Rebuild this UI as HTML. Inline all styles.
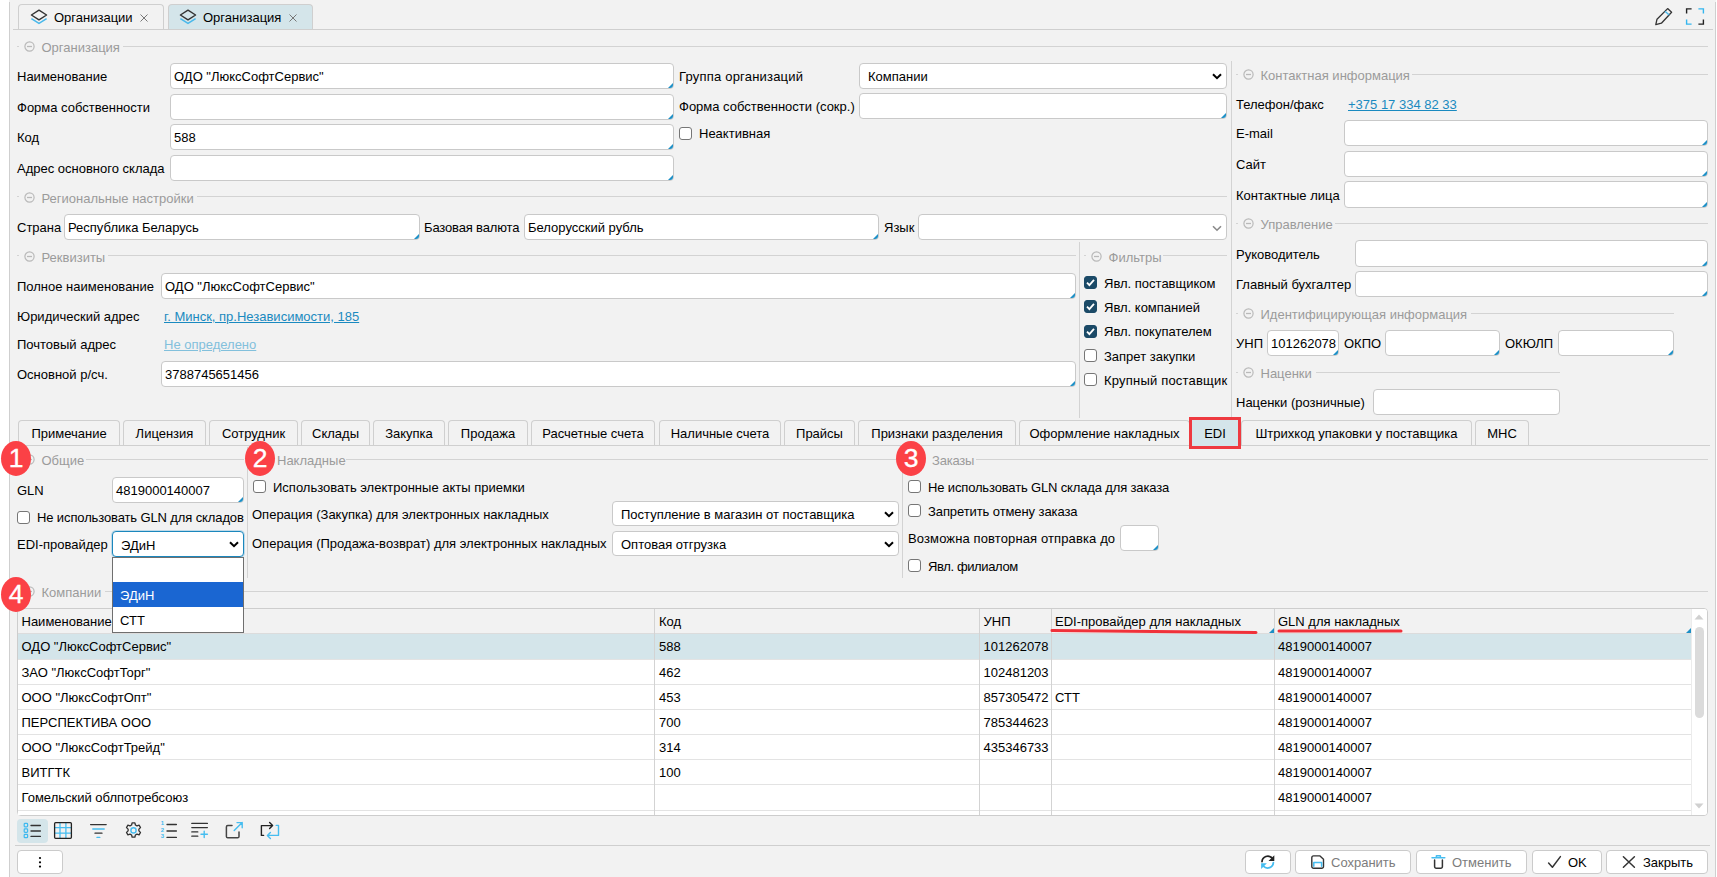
<!DOCTYPE html><html lang="ru"><head><meta charset="utf-8"><title>Организация</title><style>
*{box-sizing:border-box;margin:0;padding:0}
html,body{width:1717px;height:877px;overflow:hidden;background:#fff}
body{position:relative;font-family:"Liberation Sans",sans-serif;font-size:13px;color:#000;line-height:16px}
#bg{position:absolute;left:9px;top:0;width:1707px;height:877px;background:#f2f2f2}
.a{position:absolute;white-space:nowrap}
.in{position:absolute;background:#fff;border:1px solid #c9c9c9;border-radius:4px;height:26px;line-height:24px;padding-left:3px;padding-top:1px;white-space:nowrap;overflow:hidden}
.c::after{content:"";position:absolute;right:0;bottom:0;border-style:solid;border-width:0 0 5px 5px;border-color:transparent transparent #1c8fc6 transparent}
.sel{padding-left:8px}
.hl{position:absolute;height:1px;background:#d3d3d3}
.vl{position:absolute;width:1px;background:#d3d3d3}
.lg{position:absolute;color:#9b9b9b;white-space:nowrap}
.cb{position:absolute;width:13px;height:13px;border:1px solid #767676;border-radius:3px;background:#fff}
.cb.on{background:#1b4a67;border-color:#1b4a67}
.lk{position:absolute;color:#1a8ac0;text-decoration:underline;white-space:nowrap}
.tab{position:absolute;border:1px solid #cfcfcf;border-bottom:none;border-radius:4px 4px 0 0;height:26px;line-height:25px;text-align:center;white-space:nowrap}
.btn{position:absolute;background:#fff;border:1px solid #cbcbcb;border-radius:4px;height:24px;top:850px}
.num{position:absolute;width:30px;height:35px;border-radius:50%;background:#fb4146;color:#fff;font-size:26.5px;line-height:35px;text-align:center;-webkit-text-stroke:0.35px #fff}
svg{position:absolute;overflow:visible}
.row{position:absolute;left:18px;width:1673px;height:25px;border-bottom:1px solid #e3e3e3;background:#fff}
.cell{position:absolute;top:0;height:24px;line-height:24px;white-space:nowrap}
</style></head><body><div id="bg"></div>
<div class="vl" style="left:9px;top:2px;height:875px;background:#cfcfcf"></div>
<div class="vl" style="left:1715px;top:2px;height:875px;background:#cfcfcf"></div>
<div class="hl" style="left:13px;top:29px;width:1700px;background:#cfcfcf"></div>
<div class="tab" style="left:18px;top:4px;width:146px;height:25px"></div>
<div class="tab" style="left:168px;top:4px;width:145px;height:25px;background:#d4e5ea"></div>
<svg style="left:30px;top:9px" width="18" height="16" viewBox="0 0 18 16"><path d="M9 1.2L16.6 6 9 10.8 1.4 6z" fill="none" stroke="#333" stroke-width="1.4" stroke-linejoin="round"/><path d="M1.4 9.6L9 14.4l7.6-4.8" fill="none" stroke="#49b8ea" stroke-width="1.5" stroke-linejoin="round"/></svg>
<svg style="left:179px;top:9px" width="18" height="16" viewBox="0 0 18 16"><path d="M9 1.2L16.6 6 9 10.8 1.4 6z" fill="none" stroke="#333" stroke-width="1.4" stroke-linejoin="round"/><path d="M1.4 9.6L9 14.4l7.6-4.8" fill="none" stroke="#49b8ea" stroke-width="1.5" stroke-linejoin="round"/></svg>
<div class="a" style="left:54px;top:10px;">Организации</div>
<div class="a" style="left:203px;top:10px;">Организация</div>
<svg style="left:140px;top:14px" width="8" height="8" viewBox="0 0 8 8"><path d="M0.5 0.5l7 7M7.5 0.5l-7 7" stroke="#777" stroke-width="1"/></svg>
<svg style="left:289px;top:14px" width="8" height="8" viewBox="0 0 8 8"><path d="M0.5 0.5l7 7M7.5 0.5l-7 7" stroke="#777" stroke-width="1"/></svg>
<svg style="left:1654px;top:7px" width="20" height="19" viewBox="0 0 20 19"><path d="M13.6 1.6l4 3.6L7.4 16.2l-5.6 1.4 1.2-5.4z" fill="none" stroke="#333" stroke-width="1.3" stroke-linejoin="round"/><path d="M11 4.2l4.2 3.8" stroke="#49b8ea" stroke-width="1.4"/></svg>
<svg style="left:1685px;top:8px" width="20" height="18" viewBox="0 0 20 18"><path d="M1.6 5.4V0.9h5" fill="none" stroke="#222" stroke-width="1.4"/><path d="M13.4 0.9h5v4.5" fill="none" stroke="#35b6ee" stroke-width="1.4"/><path d="M1.6 11.6v4.5h5" fill="none" stroke="#35b6ee" stroke-width="1.4"/><path d="M13.4 16.1h5v-4.5" fill="none" stroke="#222" stroke-width="1.4"/></svg>
<div class="hl" style="left:17px;top:46px;width:2px;"></div>
<svg style="left:24px;top:40.5px" width="11" height="11" viewBox="0 0 11 11"><circle cx="5.5" cy="5.5" r="4.6" fill="none" stroke="#b9b9b9" stroke-width="1.2"/><path d="M3 5.5h5" stroke="#b9b9b9" stroke-width="1.3"/></svg>
<div class="lg" id="lg_16" style="left:41.5px;top:40px">Организация</div>
<div class="hl" style="left:123px;top:46px;width:1585px;"></div>
<div class="a" style="left:17px;top:69px;">Наименование</div>
<div class="in c" style="left:170px;top:63px;width:504px;height:26px;line-height:24px">ОДО "ЛюксСофтСервис"</div>
<div class="a" style="left:17px;top:100px;">Форма собственности</div>
<div class="in c" style="left:170px;top:94px;width:504px;height:26px;line-height:24px"></div>
<div class="a" style="left:17px;top:130px;">Код</div>
<div class="in c" style="left:170px;top:124px;width:504px;height:26px;line-height:24px">588</div>
<div class="a" style="left:17px;top:161px;">Адрес основного склада</div>
<div class="in c" style="left:170px;top:155px;width:504px;height:26px;line-height:24px"></div>
<div class="a" style="left:679px;top:69px;letter-spacing:0.2px">Группа организаций</div>
<div class="in sel" style="left:859px;top:63px;width:368px;height:26px;line-height:24px">Компании</div>
<svg style="left:1212px;top:73px" width="10" height="7" viewBox="0 0 10 7"><path d="M1 1.2l4 4 4-4" fill="none" stroke="#000" stroke-width="2"/></svg>
<div class="a" style="left:679px;top:99px;">Форма собственности (сокр.)</div>
<div class="in c" style="left:859px;top:93px;width:368px;height:26px;line-height:24px"></div>
<div class="cb" style="left:679px;top:127px"></div>
<div class="a" style="left:699px;top:126px;">Неактивная</div>
<div class="hl" style="left:17px;top:196px;width:2px;"></div>
<svg style="left:24px;top:191.5px" width="11" height="11" viewBox="0 0 11 11"><circle cx="5.5" cy="5.5" r="4.6" fill="none" stroke="#b9b9b9" stroke-width="1.2"/><path d="M3 5.5h5" stroke="#b9b9b9" stroke-width="1.3"/></svg>
<div class="lg" id="lg_35" style="left:41.5px;top:191px">Региональные настройки</div>
<div class="hl" style="left:197px;top:196px;width:1030px;"></div>
<div class="a" style="left:17px;top:220px;">Страна</div>
<div class="in c" style="left:64px;top:214px;width:356px;height:26px;line-height:24px">Республика Беларусь</div>
<div class="a" style="left:424px;top:220px;letter-spacing:-0.15px">Базовая валюта</div>
<div class="in c" style="left:524px;top:214px;width:355px;height:26px;line-height:24px">Белорусский рубль</div>
<div class="a" style="left:884px;top:220px;">Язык</div>
<div class="in" style="left:918px;top:214px;width:309px;height:26px;line-height:24px"></div>
<svg style="left:1212px;top:225px" width="10" height="7" viewBox="0 0 10 7"><path d="M1 1.2l4 4 4-4" fill="none" stroke="#8a8a8a" stroke-width="1.6"/></svg>
<div class="hl" style="left:17px;top:255px;width:2px;"></div>
<svg style="left:24px;top:250.5px" width="11" height="11" viewBox="0 0 11 11"><circle cx="5.5" cy="5.5" r="4.6" fill="none" stroke="#b9b9b9" stroke-width="1.2"/><path d="M3 5.5h5" stroke="#b9b9b9" stroke-width="1.3"/></svg>
<div class="lg" id="lg_46" style="left:41.5px;top:250px">Реквизиты</div>
<div class="hl" style="left:108px;top:255px;width:968px;"></div>
<div class="a" style="left:17px;top:279px;">Полное наименование</div>
<div class="in c" style="left:161px;top:273px;width:915px;height:26px;line-height:24px">ОДО "ЛюксСофтСервис"</div>
<div class="a" style="left:17px;top:309px;">Юридический адрес</div>
<div class="lk" style="left:164px;top:309px;">г. Минск, пр.Независимости, 185</div>
<div class="a" style="left:17px;top:337px;">Почтовый адрес</div>
<div class="lk" style="left:164px;top:337px;color:#82c0dc">Не определено</div>
<div class="a" style="left:17px;top:367px;">Основной р/сч.</div>
<div class="in c" style="left:161px;top:361px;width:915px;height:26px;line-height:24px">3788745651456</div>
<div class="vl" style="left:1079px;top:242px;height:176px"></div>
<div class="hl" style="left:1084px;top:255px;width:2px;"></div>
<svg style="left:1091px;top:250.5px" width="11" height="11" viewBox="0 0 11 11"><circle cx="5.5" cy="5.5" r="4.6" fill="none" stroke="#b9b9b9" stroke-width="1.2"/><path d="M3 5.5h5" stroke="#b9b9b9" stroke-width="1.3"/></svg>
<div class="lg" id="lg_59" style="left:1108.5px;top:250px">Фильтры</div>
<div class="hl" style="left:1163px;top:255px;width:64px;"></div>
<div class="cb on" style="left:1084px;top:276px"><svg style="left:0;top:0" width="11" height="11" viewBox="0 0 11 11"><path d="M2 5.6l2.4 2.5L9 2.8" fill="none" stroke="#fff" stroke-width="1.8"/></svg></div>
<div class="a" style="left:1104px;top:276px;">Явл. поставщиком</div>
<div class="cb on" style="left:1084px;top:300px"><svg style="left:0;top:0" width="11" height="11" viewBox="0 0 11 11"><path d="M2 5.6l2.4 2.5L9 2.8" fill="none" stroke="#fff" stroke-width="1.8"/></svg></div>
<div class="a" style="left:1104px;top:300px;">Явл. компанией</div>
<div class="cb on" style="left:1084px;top:325px"><svg style="left:0;top:0" width="11" height="11" viewBox="0 0 11 11"><path d="M2 5.6l2.4 2.5L9 2.8" fill="none" stroke="#fff" stroke-width="1.8"/></svg></div>
<div class="a" style="left:1104px;top:324px;">Явл. покупателем</div>
<div class="cb" style="left:1084px;top:349px"></div>
<div class="a" style="left:1104px;top:349px;">Запрет закупки</div>
<div class="cb" style="left:1084px;top:373px"></div>
<div class="a" style="left:1104px;top:373px;letter-spacing:0.2px">Крупный поставщик</div>
<div class="vl" style="left:1231px;top:61px;height:357px"></div>
<div class="hl" style="left:1236px;top:74px;width:2px;"></div>
<svg style="left:1243px;top:68.5px" width="11" height="11" viewBox="0 0 11 11"><circle cx="5.5" cy="5.5" r="4.6" fill="none" stroke="#b9b9b9" stroke-width="1.2"/><path d="M3 5.5h5" stroke="#b9b9b9" stroke-width="1.3"/></svg>
<div class="lg" id="lg_74" style="left:1260.5px;top:68px">Контактная информация</div>
<div class="hl" style="left:1412px;top:74px;width:296px;"></div>
<div class="a" style="left:1236px;top:97px;">Телефон/факс</div>
<div class="lk" style="left:1348px;top:97px;">+375 17 334 82 33</div>
<div class="a" style="left:1236px;top:126px;">E-mail</div>
<div class="in c" style="left:1344px;top:120px;width:364px;height:26px;line-height:24px"></div>
<div class="a" style="left:1236px;top:157px;">Сайт</div>
<div class="in c" style="left:1344px;top:151px;width:364px;height:26px;line-height:24px"></div>
<div class="a" style="left:1236px;top:188px;">Контактные лица</div>
<div class="in c" style="left:1344px;top:181px;width:364px;height:27px;line-height:25px"></div>
<div class="hl" style="left:1236px;top:223px;width:2px;"></div>
<svg style="left:1243px;top:217.5px" width="11" height="11" viewBox="0 0 11 11"><circle cx="5.5" cy="5.5" r="4.6" fill="none" stroke="#b9b9b9" stroke-width="1.2"/><path d="M3 5.5h5" stroke="#b9b9b9" stroke-width="1.3"/></svg>
<div class="lg" id="lg_86" style="left:1260.5px;top:217px">Управление</div>
<div class="hl" style="left:1335px;top:223px;width:373px;"></div>
<div class="a" style="left:1236px;top:247px;">Руководитель</div>
<div class="in c" style="left:1355px;top:240px;width:353px;height:27px;line-height:25px"></div>
<div class="a" style="left:1236px;top:277px;">Главный бухгалтер</div>
<div class="in c" style="left:1355px;top:271px;width:353px;height:26px;line-height:24px"></div>
<div class="hl" style="left:1236px;top:313px;width:2px;"></div>
<svg style="left:1243px;top:307.5px" width="11" height="11" viewBox="0 0 11 11"><circle cx="5.5" cy="5.5" r="4.6" fill="none" stroke="#b9b9b9" stroke-width="1.2"/><path d="M3 5.5h5" stroke="#b9b9b9" stroke-width="1.3"/></svg>
<div class="lg" id="lg_94" style="left:1260.5px;top:307px">Идентифицирующая информация</div>
<div class="hl" style="left:1471px;top:313px;width:203px;"></div>
<div class="a" style="left:1236px;top:336px;">УНП</div>
<div class="in c" style="left:1267px;top:330px;width:72px;height:26px;line-height:24px">101262078</div>
<div class="a" style="left:1344px;top:336px;">ОКПО</div>
<div class="in c" style="left:1385px;top:330px;width:115px;height:26px;line-height:24px"></div>
<div class="a" style="left:1505px;top:336px;">ОКЮЛП</div>
<div class="in c" style="left:1558px;top:330px;width:116px;height:26px;line-height:24px"></div>
<div class="hl" style="left:1236px;top:372px;width:2px;"></div>
<svg style="left:1243px;top:366.5px" width="11" height="11" viewBox="0 0 11 11"><circle cx="5.5" cy="5.5" r="4.6" fill="none" stroke="#b9b9b9" stroke-width="1.2"/><path d="M3 5.5h5" stroke="#b9b9b9" stroke-width="1.3"/></svg>
<div class="lg" id="lg_104" style="left:1260.5px;top:366px">Наценки</div>
<div class="hl" style="left:1316px;top:372px;width:244px;"></div>
<div class="a" style="left:1236px;top:395px;">Наценки (розничные)</div>
<div class="in" style="left:1373px;top:389px;width:187px;height:26px;line-height:24px"></div>
<div class="hl" style="left:13px;top:445px;width:1697px;background:#cfcfcf"></div>
<div class="tab" style="left:18px;top:420px;width:102px;height:25px">Примечание</div>
<div class="tab" style="left:123px;top:420px;width:83px;height:25px">Лицензия</div>
<div class="tab" style="left:209px;top:420px;width:89px;height:25px">Сотрудник</div>
<div class="tab" style="left:301px;top:420px;width:69px;height:25px">Склады</div>
<div class="tab" style="left:373px;top:420px;width:72px;height:25px">Закупка</div>
<div class="tab" style="left:448px;top:420px;width:80px;height:25px">Продажа</div>
<div class="tab" style="left:531px;top:420px;width:124px;height:25px">Расчетные счета</div>
<div class="tab" style="left:659px;top:420px;width:122px;height:25px">Наличные счета</div>
<div class="tab" style="left:784px;top:420px;width:71px;height:25px">Прайсы</div>
<div class="tab" style="left:858px;top:420px;width:158px;height:25px">Признаки разделения</div>
<div class="tab" style="left:1019px;top:420px;width:171px;height:25px">Оформление накладных</div>
<div class="tab" style="left:1189px;top:417px;width:52px;height:32px;line-height:27px;border:3px solid #ee3a40;border-radius:0;background:#d4e5ea">EDI</div>
<div class="tab" style="left:1241px;top:420px;width:231px;height:25px">Штрихкод упаковки у поставщика</div>
<div class="tab" style="left:1475px;top:420px;width:54px;height:25px">МНС</div>
<div class="hl" style="left:17px;top:459px;width:2px;"></div>
<svg style="left:24px;top:453.5px" width="11" height="11" viewBox="0 0 11 11"><circle cx="5.5" cy="5.5" r="4.6" fill="none" stroke="#b9b9b9" stroke-width="1.2"/><path d="M3 5.5h5" stroke="#b9b9b9" stroke-width="1.3"/></svg>
<div class="lg" id="lg_125" style="left:41.5px;top:453px">Общие</div>
<div class="hl" style="left:86px;top:459px;width:158px;"></div>
<div class="a" style="left:17px;top:483px;">GLN</div>
<div class="in c" style="left:112px;top:477px;width:132px;height:26px;line-height:24px">4819000140007</div>
<div class="cb" style="left:17px;top:511px"></div>
<div class="a" style="left:37px;top:510px;letter-spacing:-0.12px">Не использовать GLN для складов</div>
<div class="a" style="left:17px;top:537px;">EDI-провайдер</div>
<div class="in sel" style="left:112px;top:531px;width:132px;border-color:#1b87bd;box-shadow:0 0 0 1px rgba(100,175,215,.35);padding-top:2px">ЭДиН</div>
<svg style="left:229px;top:541px" width="10" height="7" viewBox="0 0 10 7"><path d="M1 1.2l4 4 4-4" fill="none" stroke="#000" stroke-width="2"/></svg>
<div class="vl" style="left:247px;top:447px;height:131px"></div>
<div class="hl" style="left:248px;top:459px;width:4px;"></div>
<div class="lg" style="left:277px;top:453px">Накладные</div>
<div class="hl" style="left:346px;top:459px;width:552px;"></div>
<div class="cb" style="left:253px;top:480px"></div>
<div class="a" style="left:273px;top:480px;">Использовать электронные акты приемки</div>
<div class="a" style="left:252px;top:507px;">Операция (Закупка) для электронных накладных</div>
<div class="a" style="left:252px;top:536px;">Операция (Продажа-возврат) для электронных накладных</div>
<div class="in sel" style="left:612px;top:501px;width:287px;height:25px;line-height:23px">Поступление в магазин от поставщика</div>
<svg style="left:884px;top:511px" width="10" height="7" viewBox="0 0 10 7"><path d="M1 1.2l4 4 4-4" fill="none" stroke="#000" stroke-width="2"/></svg>
<div class="in sel" style="left:612px;top:531px;width:287px;height:25px;line-height:23px">Оптовая отгрузка</div>
<svg style="left:884px;top:541px" width="10" height="7" viewBox="0 0 10 7"><path d="M1 1.2l4 4 4-4" fill="none" stroke="#000" stroke-width="2"/></svg>
<div class="vl" style="left:902px;top:447px;height:131px"></div>
<div class="lg" style="left:932px;top:453px;letter-spacing:-0.2px">Заказы</div>
<div class="hl" style="left:976px;top:459px;width:732px;"></div>
<div class="cb" style="left:908px;top:480px"></div>
<div class="a" style="left:928px;top:480px;letter-spacing:-0.15px">Не использовать GLN склада для заказа</div>
<div class="cb" style="left:908px;top:504px"></div>
<div class="a" style="left:928px;top:504px;letter-spacing:-0.09px">Запретить отмену заказа</div>
<div class="a" style="left:908px;top:531px;letter-spacing:0.12px">Возможна повторная отправка до</div>
<div class="in c" style="left:1120px;top:525px;width:39px;height:26px;line-height:24px"></div>
<div class="cb" style="left:908px;top:559px"></div>
<div class="a" style="left:928px;top:559px;letter-spacing:-0.38px">Явл. филиалом</div>
<div class="hl" style="left:17px;top:591px;width:2px;"></div>
<svg style="left:24px;top:585.5px" width="11" height="11" viewBox="0 0 11 11"><circle cx="5.5" cy="5.5" r="4.6" fill="none" stroke="#b9b9b9" stroke-width="1.2"/><path d="M3 5.5h5" stroke="#b9b9b9" stroke-width="1.3"/></svg>
<div class="lg" id="lg_159" style="left:41.5px;top:585px">Компании</div>
<div class="hl" style="left:105px;top:591px;width:1603px;"></div>
<div class="a" style="left:17px;top:608px;width:1691px;height:208px;border:1px solid #cdcdcd;border-radius:4px;background:#fff;overflow:hidden"></div>
<div class="a" style="left:18px;top:609px;width:1673px;height:25px;background:#f2f2f2;border-bottom:1px solid #dcdcdc"></div>
<div class="a" style="left:21.5px;top:614px;">Наименование</div>
<div class="a" style="left:659px;top:614px;">Код</div>
<div class="a" style="left:983.5px;top:614px;">УНП</div>
<div class="a" style="left:1055px;top:614px;">EDI-провайдер для накладных</div>
<div class="a" style="left:1278px;top:614px;">GLN для накладных</div>
<div class="row" style="top:634px;height:26px;background:#d4e5ea;">
<span class="cell" style="left:3.5px;top:1px">ОДО "ЛюксСофтСервис"</span>
<span class="cell" style="left:641px;top:1px">588</span>
<span class="cell" style="left:965.5px;top:1px">101262078</span>
<span class="cell" style="left:1260px;top:1px">4819000140007</span>
</div>
<div class="row" style="top:660px;height:25px;">
<span class="cell" style="left:3.5px;top:1px">ЗАО "ЛюксСофтТорг"</span>
<span class="cell" style="left:641px;top:1px">462</span>
<span class="cell" style="left:965.5px;top:1px">102481203</span>
<span class="cell" style="left:1260px;top:1px">4819000140007</span>
</div>
<div class="row" style="top:685px;height:25px;">
<span class="cell" style="left:3.5px;top:1px">ООО "ЛюксСофтОпт"</span>
<span class="cell" style="left:641px;top:1px">453</span>
<span class="cell" style="left:965.5px;top:1px">857305472</span>
<span class="cell" style="left:1037px;top:1px">СТТ</span>
<span class="cell" style="left:1260px;top:1px">4819000140007</span>
</div>
<div class="row" style="top:710px;height:25px;">
<span class="cell" style="left:3.5px;top:1px">ПЕРСПЕКТИВА ООО</span>
<span class="cell" style="left:641px;top:1px">700</span>
<span class="cell" style="left:965.5px;top:1px">785344623</span>
<span class="cell" style="left:1260px;top:1px">4819000140007</span>
</div>
<div class="row" style="top:735px;height:25px;">
<span class="cell" style="left:3.5px;top:1px">ООО "ЛюксСофтТрейд"</span>
<span class="cell" style="left:641px;top:1px">314</span>
<span class="cell" style="left:965.5px;top:1px">435346733</span>
<span class="cell" style="left:1260px;top:1px">4819000140007</span>
</div>
<div class="row" style="top:760px;height:25px;">
<span class="cell" style="left:3.5px;top:1px">ВИТГТК</span>
<span class="cell" style="left:641px;top:1px">100</span>
<span class="cell" style="left:1260px;top:1px">4819000140007</span>
</div>
<div class="row" style="top:785px;height:26px;">
<span class="cell" style="left:3.5px;top:1px">Гомельский облпотребсоюз</span>
<span class="cell" style="left:1260px;top:1px">4819000140007</span>
</div>
<div class="a" style="left:18px;top:811px;width:1673px;height:4px;background:#fff"></div>
<div class="vl" style="left:654px;top:609px;height:206px"></div>
<div class="vl" style="left:979px;top:609px;height:206px"></div>
<div class="vl" style="left:1051px;top:609px;height:206px"></div>
<div class="vl" style="left:1274px;top:609px;height:206px"></div>
<div class="a" style="left:1269px;top:628px;border-style:solid;border-width:0 0 5px 5px;border-color:transparent transparent #1c8fc6 transparent"></div>
<div class="a" style="left:1686px;top:628px;border-style:solid;border-width:0 0 5px 5px;border-color:transparent transparent #1c8fc6 transparent"></div>
<svg style="left:1050px;top:627px" width="360" height="10" viewBox="0 0 360 10"><path d="M2 3.5Q100 4.5 206 5.5" fill="none" stroke="#f0313a" stroke-width="3" stroke-linecap="round"/><path d="M229 4h122" fill="none" stroke="#f0313a" stroke-width="3" stroke-linecap="round"/></svg>
<div class="a" style="left:1691px;top:609px;width:16px;height:206px;background:#fff;border-left:1px solid #ececec;border-radius:0 3px 3px 0"></div>
<div class="a" style="left:1695px;top:627px;width:9px;height:91px;background:#dbdbdb;border-radius:5px"></div>
<svg style="left:1694px;top:614px" width="10" height="6" viewBox="0 0 10 6"><path d="M5 0.5L9.5 5.5h-9z" fill="#d0d0d0"/></svg>
<svg style="left:1694px;top:803px" width="10" height="6" viewBox="0 0 10 6"><path d="M5 5.5L9.5 0.5h-9z" fill="#d0d0d0"/></svg>
<div class="a" style="left:112px;top:557px;width:132px;height:76px;background:#fff;border:1px solid #6f6f6f"></div>
<div class="a" style="left:113px;top:582px;width:130px;height:25px;background:#1a66d2;color:#fff;line-height:27px;padding-left:7px">ЭДиН</div>
<div class="a" style="left:113px;top:607px;width:130px;height:25px;line-height:27px;padding-left:7px">СТТ</div>
<div class="num" style="left:1px;top:441px">1</div>
<div class="num" style="left:245px;top:441px">2</div>
<div class="num" style="left:896px;top:441px">3</div>
<div class="num" style="left:1px;top:577px">4</div>
<div class="a" style="left:17px;top:819px;width:31px;height:24px;background:#d4e5ea;border-radius:4px"></div>
<svg style="left:0;top:0" width="300" height="877" viewBox="0 0 300 877" fill="none" stroke-linecap="round" stroke-linejoin="round">
<g stroke="#3fb9ef" stroke-width="1.2">
<rect x="24.2" y="823.4" width="3.4" height="3.4" rx="0.8"/><rect x="24.2" y="828.9" width="3.4" height="3.4" rx="0.8"/><rect x="24.2" y="834.3" width="3.4" height="3.4" rx="0.8"/>
</g>
<g stroke="#333" stroke-width="1.3"><path d="M31 825.5h9.4M31 831h9.4M31 836.4h9.4"/></g>
<g stroke="#46bdf0" stroke-width="1.3"><path d="M60 823v15M65.9 823v15M55 827.6h16M55 833.2h16"/></g>
<rect x="54.6" y="822.7" width="16.8" height="15.6" rx="1" stroke="#222" stroke-width="1.3"/>
<g stroke="#333" stroke-width="1.3"><path d="M90.6 824.6h15.6M95 833.2h7"/></g>
<g stroke="#46bdf0" stroke-width="1.4"><path d="M92.8 829h11.4M97 837.4h2.8"/></g>
<path id="gear" stroke="#333" stroke-width="1.3" d="M132.1 822.8h2.8l.5 2.2 1.6.9 2.1-.7 1.4 2.4-1.6 1.5v1.8l1.6 1.5-1.4 2.4-2.1-.7-1.6.9-.5 2.2h-2.8l-.5-2.2-1.6-.9-2.1.7-1.4-2.4 1.6-1.5v-1.8l-1.6-1.5 1.4-2.4 2.1.7 1.6-.9z"/>
<circle cx="133.5" cy="830.4" r="2.6" stroke="#46bdf0" stroke-width="1.4"/>
<g stroke="#333" stroke-width="1.3"><path d="M167 824.5h9.4M167 831h9.4M167 837.4h9.4"/></g>
<g stroke="#333" stroke-width="1.3"><path d="M191.8 823.4h15.6M191.8 827.6h15.6M191.8 831.9h6M191.8 836.2h6"/></g>
<path d="M201 834.3h6.4M204.2 831.1v6.4" stroke="#46bdf0" stroke-width="1.4"/>
<path d="M232 825.6h-4.2a1.4 1.4 0 0 0-1.4 1.4v9.4a1.4 1.4 0 0 0 1.4 1.4h9.8a1.4 1.4 0 0 0 1.4-1.4v-4.4" stroke="#444" stroke-width="1.5"/>
<path d="M234.2 830.6l8-8M237 822.6h5.2v5.2" stroke="#46bdf0" stroke-width="1.4"/>
<path d="M263.6 835.4h-2.2v-9.8h11M269.6 822.6l3 3-3 3" stroke="#222" stroke-width="1.4"/>
<path d="M276.2 825.4h2.3v10h-11M270.4 832.4l-3 3 3 3" stroke="#46bdf0" stroke-width="1.4"/>
</svg>
<div class="a" style="left:160px;top:820px;font-size:6px;line-height:6.5px;color:#3fb9ef;font-weight:bold;width:5px;text-align:center">1<br>2<br>3</div>

<div class="hl" style="left:15px;top:845px;width:1695px;background:#cfcfcf"></div>
<div class="btn" style="left:17px;width:46px"></div>
<div class="btn" style="left:1245px;width:46px"></div>
<div class="btn" style="left:1295px;width:116px"></div>
<div class="btn" style="left:1416px;width:111px"></div>
<div class="btn" style="left:1532px;width:70px"></div>
<div class="btn" style="left:1606px;width:102px"></div>
<svg style="left:1240px;top:845px" width="470" height="32" viewBox="1240 845 470 32" fill="none" stroke-linecap="round" stroke-linejoin="round">
<path d="M1262 861.6a5.8 5.8 0 0 1 10-3.6" stroke="#222" stroke-width="1.7"/>
<path d="M1274.3 855.2v5.8h-5.8z" fill="#222" stroke="none"/>
<path d="M1273.4 862.6a5.8 5.8 0 0 1-10 3.6" stroke="#46bdf0" stroke-width="1.7"/>
<path d="M1261.1 869v-5.8h5.8z" fill="#46bdf0" stroke="none"/>
<path d="M1313.6 855.9h6.4l3.5 3.3v7.2a1.8 1.8 0 0 1-1.8 1.8h-8.1a1.8 1.8 0 0 1-1.8-1.8v-8.7a1.8 1.8 0 0 1 1.8-1.8z" stroke="#333" stroke-width="1.4"/>
<path d="M1313.8 866.2v-3.8h7.8v3.8" stroke="#46bdf0" stroke-width="1.5"/>
<path d="M1432 857.8h12.8M1436.4 857.4v-1.6h4v1.6" stroke="#46bdf0" stroke-width="1.5"/>
<path d="M1434.6 860v6.6a1.6 1.6 0 0 0 1.6 1.6h4.6a1.6 1.6 0 0 0 1.6-1.6V860" stroke="#333" stroke-width="1.5"/>
<path d="M1548.6 863l3.8 4.2 8-10.6" stroke="#333" stroke-width="1.5"/>
<path d="M1623.4 856.8l11 10.4M1634.4 856.8l-11 10.4" stroke="#333" stroke-width="1.5"/>
</svg>
<svg style="left:38px;top:856px" width="4" height="12" viewBox="0 0 4 12"><circle cx="2" cy="2" r="1.1" fill="#000"/><circle cx="2" cy="6.3" r="1.1" fill="#000"/><circle cx="2" cy="10.6" r="1.1" fill="#000"/></svg>

<div class="a" style="left:1331px;top:854.5px;color:#7c7c7c">Сохранить</div>
<div class="a" style="left:1452px;top:854.5px;color:#7c7c7c">Отменить</div>
<div class="a" style="left:1568px;top:854.5px;">OK</div>
<div class="a" style="left:1643px;top:854.5px;">Закрыть</div>
</body></html>
